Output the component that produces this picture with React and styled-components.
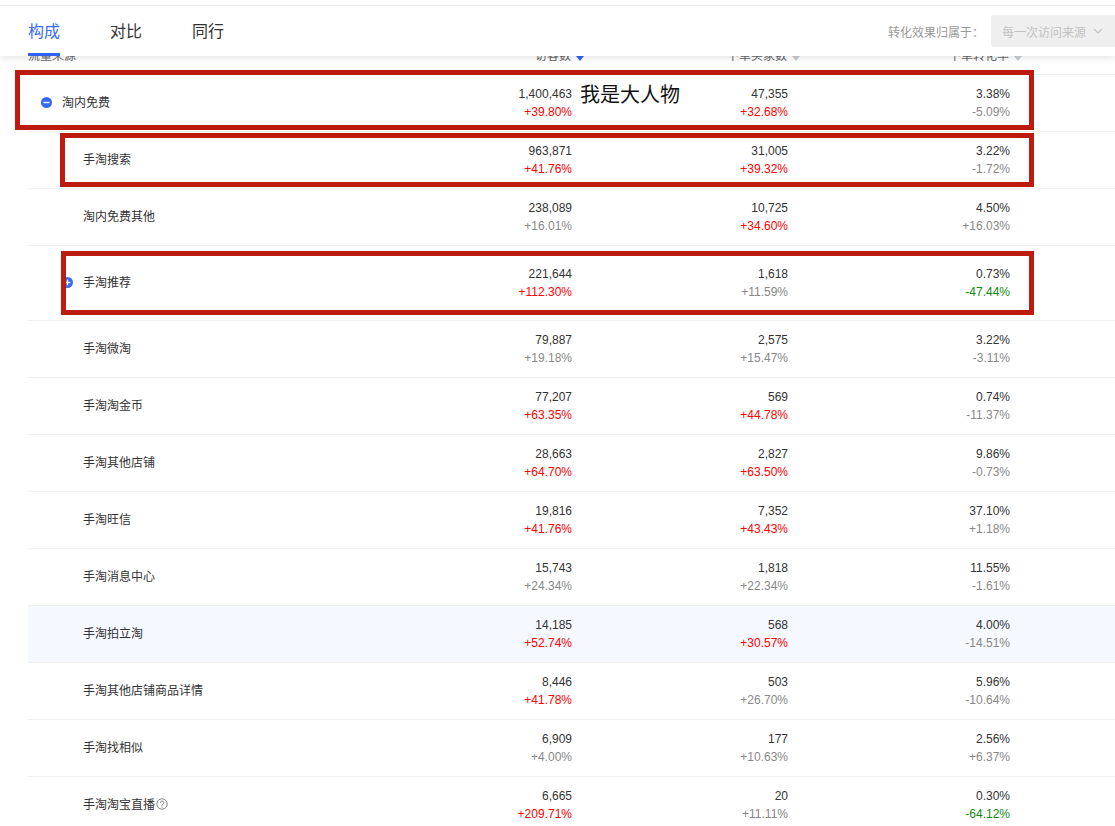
import React from "react";
import styled, { createGlobalStyle } from "styled-components";

const GlobalStyle = createGlobalStyle`
  html, body {
    margin: 0;
    padding: 0;
    overflow: hidden;
    background: #fff;
  }
  body {
    font-family: "Liberation Sans", "Noto Sans CJK SC", sans-serif;
    color: #333;
  }
`;

// tone: up = red, flat = grey, down = green
const rows = [
  {
    name: "淘内免费", level: 1, icon: "minus",
    cells: [["1,400,463", "+39.80%", "up"], ["47,355", "+32.68%", "up"], ["3.38%", "-5.09%", "flat"]],
    mark: { l: -13, t: -5, w: 1019, h: 60 },
    note: "我是大人物",
  },
  {
    name: "手淘搜索", level: 2,
    cells: [["963,871", "+41.76%", "up"], ["31,005", "+39.32%", "up"], ["3.22%", "-1.72%", "flat"]],
    mark: { l: 32, t: 1, w: 974, h: 54 },
  },
  {
    name: "淘内免费其他", level: 2,
    cells: [["238,089", "+16.01%", "flat"], ["10,725", "+34.60%", "up"], ["4.50%", "+16.03%", "flat"]],
  },
  {
    name: "手淘推荐", level: 2, icon: "plus", tall: true,
    cells: [["221,644", "+112.30%", "up"], ["1,618", "+11.59%", "flat"], ["0.73%", "-47.44%", "down"]],
    mark: { l: 33, t: 5, w: 973, h: 64 },
  },
  {
    name: "手淘微淘", level: 2,
    cells: [["79,887", "+19.18%", "flat"], ["2,575", "+15.47%", "flat"], ["3.22%", "-3.11%", "flat"]],
  },
  {
    name: "手淘淘金币", level: 2,
    cells: [["77,207", "+63.35%", "up"], ["569", "+44.78%", "up"], ["0.74%", "-11.37%", "flat"]],
  },
  {
    name: "手淘其他店铺", level: 2,
    cells: [["28,663", "+64.70%", "up"], ["2,827", "+63.50%", "up"], ["9.86%", "-0.73%", "flat"]],
  },
  {
    name: "手淘旺信", level: 2,
    cells: [["19,816", "+41.76%", "up"], ["7,352", "+43.43%", "up"], ["37.10%", "+1.18%", "flat"]],
  },
  {
    name: "手淘消息中心", level: 2,
    cells: [["15,743", "+24.34%", "flat"], ["1,818", "+22.34%", "flat"], ["11.55%", "-1.61%", "flat"]],
  },
  {
    name: "手淘拍立淘", level: 2, hover: true,
    cells: [["14,185", "+52.74%", "up"], ["568", "+30.57%", "up"], ["4.00%", "-14.51%", "flat"]],
  },
  {
    name: "手淘其他店铺商品详情", level: 2,
    cells: [["8,446", "+41.78%", "up"], ["503", "+26.70%", "flat"], ["5.96%", "-10.64%", "flat"]],
  },
  {
    name: "手淘找相似", level: 2,
    cells: [["6,909", "+4.00%", "flat"], ["177", "+10.63%", "flat"], ["2.56%", "+6.37%", "flat"]],
  },
  {
    name: "手淘淘宝直播", level: 2, help: true,
    cells: [["6,665", "+209.71%", "up"], ["20", "+11.11%", "flat"], ["0.30%", "-64.12%", "down"]],
  },
];

const toneColor = {
  up: "#ff0000",
  flat: "#888",
  down: "#118a11",
};

const Page = styled.div`
  padding-top: 5px;
`;

const TabBar = styled.div`
  position: sticky;
  top: 0;
  z-index: 2;
  height: 50px;
  display: flex;
  align-items: stretch;
  padding-left: 28px;
  background: #fff;
  border-top: 1px solid #ececec;
  box-shadow: 0 3px 7px rgba(0, 0, 0, 0.09);
`;

const Tab = styled.div`
  display: flex;
  align-items: center;
  margin-right: 50px;
  padding-top: 1px;
  font-family: "Noto Sans CJK SC", sans-serif;
  font-size: 16px;
  color: ${(p) => (p.$active ? "#3a6cf4" : "#333")};
  border-bottom: 3px solid ${(p) => (p.$active ? "#2f62f0" : "transparent")};
`;

const Attribution = styled.div`
  margin-left: auto;
  display: flex;
  align-items: center;
  gap: 7px;
`;

const AttrLabel = styled.span`
  font-family: "Noto Sans CJK SC", sans-serif;
  font-size: 12px;
  color: #999;
`;

const FakeSelect = styled.div`
  width: 124px;
  height: 32px;
  box-sizing: border-box;
  display: flex;
  align-items: center;
  justify-content: space-between;
  padding: 0 12px 0 11px;
  background: #efefef;
  border-radius: 3px 0 0 3px;
  font-family: "Noto Sans CJK SC", sans-serif;
  font-size: 12px;
  color: #c2c2c2;
`;

const Table = styled.div`
  margin: -18px 0 0 28px;
  font-size: 12px;
`;

const gridCols = "344px 200px 216px 222px 1fr";

const HeadRow = styled.div`
  display: grid;
  grid-template-columns: ${gridCols};
  align-items: center;
  height: 37px;
  box-sizing: border-box;
  padding-bottom: 4px;
  border-bottom: 1px solid #eee;
  color: #666;
  font-family: "Noto Sans CJK SC", sans-serif;
`;

const HeadCell = styled.div`
  display: flex;
  justify-content: ${(p) => (p.$num ? "flex-end" : "flex-start")};
`;

const HeadLabel = styled.span`
  display: flex;
  align-items: center;
  gap: 5px;
  margin-right: -12px;
`;

const SortMark = styled.span`
  width: 0;
  height: 0;
  margin-top: 8px;
  border-left: 4px solid transparent;
  border-right: 4px solid transparent;
  border-top: 5px solid ${(p) => (p.$active ? "#2f62f0" : "#c8ccd4")};
`;

const Row = styled.div`
  position: relative;
  display: grid;
  grid-template-columns: ${gridCols};
  align-items: center;
  height: ${(p) => (p.$tall ? 75 : 57)}px;
  box-sizing: border-box;
  border-bottom: 1px solid #eee;
  background: ${(p) => (p.$hover ? "#f5f8fe" : "#fff")};
`;

const NameCell = styled.div`
  display: flex;
  align-items: center;
  padding-left: ${(p) => 13 + (p.$level - 1) * 21}px;
  padding-bottom: 3px;
  font-family: "Noto Sans CJK SC", sans-serif;
  line-height: 18px;
  color: #333;
`;

const IconSlot = styled.span`
  width: 11px;
  height: 11px;
  margin: 2px 10px 0 0;
  display: inline-flex;
`;

const NameText = styled.span`
  display: inline-flex;
  align-items: center;
`;

const NumCell = styled.div`
  display: flex;
  flex-direction: column;
  align-items: flex-end;
  line-height: 18px;
`;

const Value = styled.span`
  color: #333;
`;

const Change = styled.span`
  color: ${(p) => toneColor[p.$tone]};
`;

const Mark = styled.div`
  position: absolute;
  left: ${(p) => p.$l}px;
  top: ${(p) => p.$t}px;
  width: ${(p) => p.$w}px;
  height: ${(p) => p.$h}px;
  box-sizing: border-box;
  border: 5px solid #bd1b10;
  pointer-events: none;
`;

const Note = styled.div`
  position: absolute;
  left: 552px;
  top: 8px;
  font-family: "Noto Sans CJK SC", sans-serif;
  font-size: 20px;
  line-height: 22px;
  color: #111;
`;

const ExpandIcon = ({ type }) => (
  <svg width="11" height="11" viewBox="0 0 11 11">
    <circle cx="5.5" cy="5.5" r="5.5" fill="#3568f2" />
    <rect x="2.5" y="4.8" width="6" height="1.4" fill="#fff" />
    {type === "plus" && <rect x="4.8" y="2.5" width="1.4" height="6" fill="#fff" />}
  </svg>
);

const HelpIcon = () => (
  <svg width="12" height="12" viewBox="0 0 12 12" style={{ marginLeft: 1 }}>
    <circle cx="6" cy="6" r="5.2" fill="none" stroke="#777" strokeWidth="0.9" />
    <path
      d="M4.3 4.7a1.7 1.7 0 1 1 2.5 1.5c-.5.3-.8.6-.8 1.2v.4"
      fill="none"
      stroke="#777"
      strokeWidth="0.9"
      strokeLinecap="round"
    />
    <circle cx="6" cy="9.1" r="0.6" fill="#777" />
  </svg>
);

const Chevron = () => (
  <svg width="10" height="6" viewBox="0 0 10 6">
    <polyline points="1,1 5,5 9,1" fill="none" stroke="#c4c4c4" strokeWidth="1.2" />
  </svg>
);

export default function App() {
  return (
    <Page>
      <GlobalStyle />
      <TabBar>
        <Tab $active>构成</Tab>
        <Tab>对比</Tab>
        <Tab>同行</Tab>
        <Attribution>
          <AttrLabel>转化效果归属于：</AttrLabel>
          <FakeSelect>
            <span>每一次访问来源</span>
            <Chevron />
          </FakeSelect>
        </Attribution>
      </TabBar>

      <Table>
        <HeadRow>
          <HeadCell>流量来源</HeadCell>
          <HeadCell $num>
            <HeadLabel>
              访客数 <SortMark $active />
            </HeadLabel>
          </HeadCell>
          <HeadCell $num>
            <HeadLabel>
              下单买家数 <SortMark />
            </HeadLabel>
          </HeadCell>
          <HeadCell $num>
            <HeadLabel>
              下单转化率 <SortMark />
            </HeadLabel>
          </HeadCell>
          <HeadCell />
        </HeadRow>

        {rows.map((r) => (
          <Row key={r.name} $tall={r.tall} $hover={r.hover}>
            <NameCell $level={r.level}>
              <IconSlot>{r.icon && <ExpandIcon type={r.icon} />}</IconSlot>
              <NameText>
                {r.name}
                {r.help && <HelpIcon />}
              </NameText>
            </NameCell>
            {r.cells.map(([value, change, tone], i) => (
              <NumCell key={i}>
                <Value>{value}</Value>
                <Change $tone={tone}>{change}</Change>
              </NumCell>
            ))}
            <div />
            {r.mark && <Mark $l={r.mark.l} $t={r.mark.t} $w={r.mark.w} $h={r.mark.h} />}
            {r.note && <Note>{r.note}</Note>}
          </Row>
        ))}
      </Table>
    </Page>
  );
}
